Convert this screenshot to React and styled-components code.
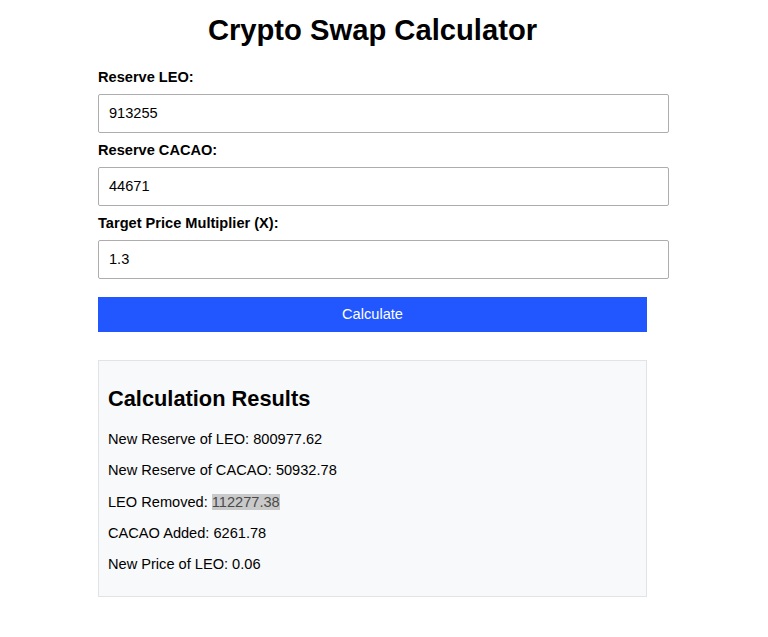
import React from "react"
import styled, { createGlobalStyle } from "styled-components"

const GlobalStyle = createGlobalStyle`
  body {
    margin: 0;
    background: #ffffff;
    font-family: "Liberation Sans", Arial, sans-serif;
    color: #000000;
  }
`

const Page = styled.div`
  width: 549px;
  padding: 14px 0 20px 98px;
`

const Title = styled.h1`
  margin: 0 0 22px;
  font-size: 29.2px;
  font-weight: 700;
  text-align: center;
`

const Form = styled.form`
  display: block;
`

const Label = styled.label`
  display: block;
  margin-bottom: 9px;
  font-size: 14.6px;
  font-weight: 700;
`

const Input = styled.input`
  display: block;
  width: 100%;
  margin: 0 0 9px;
  padding: 10px 10px;
  border: 1px solid #adadad;
  border-radius: 2px;
  font-family: inherit;
  font-size: 14.6px;
  line-height: 17px;
  color: #000000;
  background: #ffffff;
  outline: none;
`

const Button = styled.button`
  display: block;
  width: 100%;
  margin-top: 18px;
  padding: 9px 0;
  border: none;
  background: #2257ff;
  color: #ffffff;
  font-family: inherit;
  font-size: 14.6px;
  line-height: 17px;
  cursor: pointer;
`

const Results = styled.section`
  margin-top: 28px;
  padding: 9px;
  background: #f8f9fa;
  border: 1px solid #e2e3e5;
`

const ResultsTitle = styled.h2`
  margin: 16px 0 19px;
  font-size: 21.8px;
  font-weight: 700;
`

const Line = styled.p`
  margin: 15.3px 0;
  font-size: 14.6px;
`

const Marked = styled.span`
  background: #c9c9c9;
  color: #4a4a4a;
`

const fields = [
  { label: "Reserve LEO:", value: "913255" },
  { label: "Reserve CACAO:", value: "44671" },
  { label: "Target Price Multiplier (X):", value: "1.3" },
]

export default function App() {
  return (
    <>
      <GlobalStyle />
      <Page>
        <Title>Crypto Swap Calculator</Title>
        <Form onSubmit={e => e.preventDefault()}>
          {fields.map(f => (
            <div key={f.label}>
              <Label>{f.label}</Label>
              <Input type="text" defaultValue={f.value} />
            </div>
          ))}
          <Button type="submit">Calculate</Button>
        </Form>
        <Results>
          <ResultsTitle>Calculation Results</ResultsTitle>
          <Line>New Reserve of LEO: 800977.62</Line>
          <Line>New Reserve of CACAO: 50932.78</Line>
          <Line>
            LEO Removed: <Marked>112277.38</Marked>
          </Line>
          <Line>CACAO Added: 6261.78</Line>
          <Line>New Price of LEO: 0.06</Line>
        </Results>
      </Page>
    </>
  )
}
